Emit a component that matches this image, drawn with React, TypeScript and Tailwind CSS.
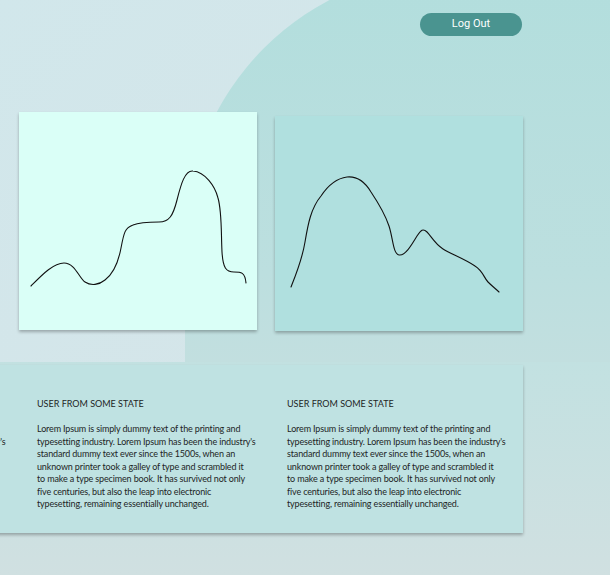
const lines = [
  "Lorem Ipsum is simply dummy text of the printing and",
  "typesetting industry. Lorem Ipsum has been the industry's",
  "standard dummy text ever since the 1500s, when an",
  "unknown printer took a galley of type and scrambled it",
  "to make a type specimen book. It has survived not only",
  "five centuries, but also the leap into electronic",
  "typesetting, remaining essentially unchanged.",
];

function Review() {
  return (
    <div className="w-[218px] shrink-0 text-[#222525]">
      <p className="text-[9px] leading-[12px]">USER FROM SOME STATE</p>
      <div className="mt-[13px] text-[9px] leading-[12.5px] tracking-[-0.15px]">
        {lines.map((l) => (
          <p key={l} className="whitespace-nowrap">
            {l}
          </p>
        ))}
      </div>
    </div>
  );
}

function Sketch({ d, w, h }: { d: string; w: number; h: number }) {
  return (
    <svg width={w} height={h} viewBox={`0 0 ${w} ${h}`} className="block">
      <path d={d} fill="none" stroke="#111" strokeWidth="1.1" strokeLinecap="round" />
    </svg>
  );
}

export default function App() {
  return (
    <div className="relative h-[575px] w-[610px] overflow-hidden bg-gradient-to-br from-[#d1e7eb] to-[#d8e4e8] font-['Lato',sans-serif]">
      <div className="absolute bottom-0 left-[185px] right-0 top-[-31px] rounded-tl-[270px] bg-gradient-to-b from-[#b2dedd] via-[#bcdfdf] to-[#d0dfe0]" />
      <div className="absolute bottom-0 left-0 right-0 top-[362px] bg-gradient-to-b from-[#c2e1e1] to-[#d0e0e1]" />

      <div className="relative">
        <header className="flex justify-end pr-[88px] pt-[13px]">
          <button className="h-[23px] w-[102px] rounded-full bg-[#4a9490] font-['Roboto',sans-serif] text-[11px] text-white">
            Log Out
          </button>
        </header>

        <section className="mt-[76px] flex items-start gap-[18px] pl-[19px]">
          <div className="h-[218px] w-[238px] bg-[#dafff7] shadow-[0_2px_3px_rgba(0,0,0,0.28)]">
            <Sketch
              w={238}
              h={218}
              d="M12 174 C22 164 34 151 45 151 C56 151 60 166 66 170 C72 174 80 173 86 168 C94 162 99 152 102 136 C105 120 106 116 114 113 C121 110 130 110 140 110 C150 110 154 104 158 88 C162 72 166 58 174 59 C186 60 196 74 199 86 C203 100 202 120 203 140 C204 156 207 160 215 160 C222 160 226 160 227 171"
            />
          </div>
          <div className="mt-[4px] h-[215px] w-[248px] bg-[#b0e0df] shadow-[0_2px_3px_rgba(0,0,0,0.28)]">
            <Sketch
              w={248}
              h={215}
              d="M16 171 C22 156 27 144 30 126 C33 108 36 92 46 80 C54 68 64 62 72 61 C82 60 90 66 96 76 C104 88 110 98 114 110 C118 122 118 138 124 139 C130 140 136 130 142 120 C146 114 148 112 152 116 C156 120 160 128 168 133 C176 138 190 143 200 150 C208 155 209 162 213 166 C217 170 221 173 224 176"
            />
          </div>
        </section>

        <section className="ml-[-250px] mt-[34px] flex h-[168px] w-[773px] gap-[32px] bg-[#bfe2e2] pl-[37px] pt-[33px] shadow-[0_2px_3px_rgba(0,0,0,0.28)]">
          <Review />
          <Review />
          <Review />
        </section>
      </div>
    </div>
  );
}
